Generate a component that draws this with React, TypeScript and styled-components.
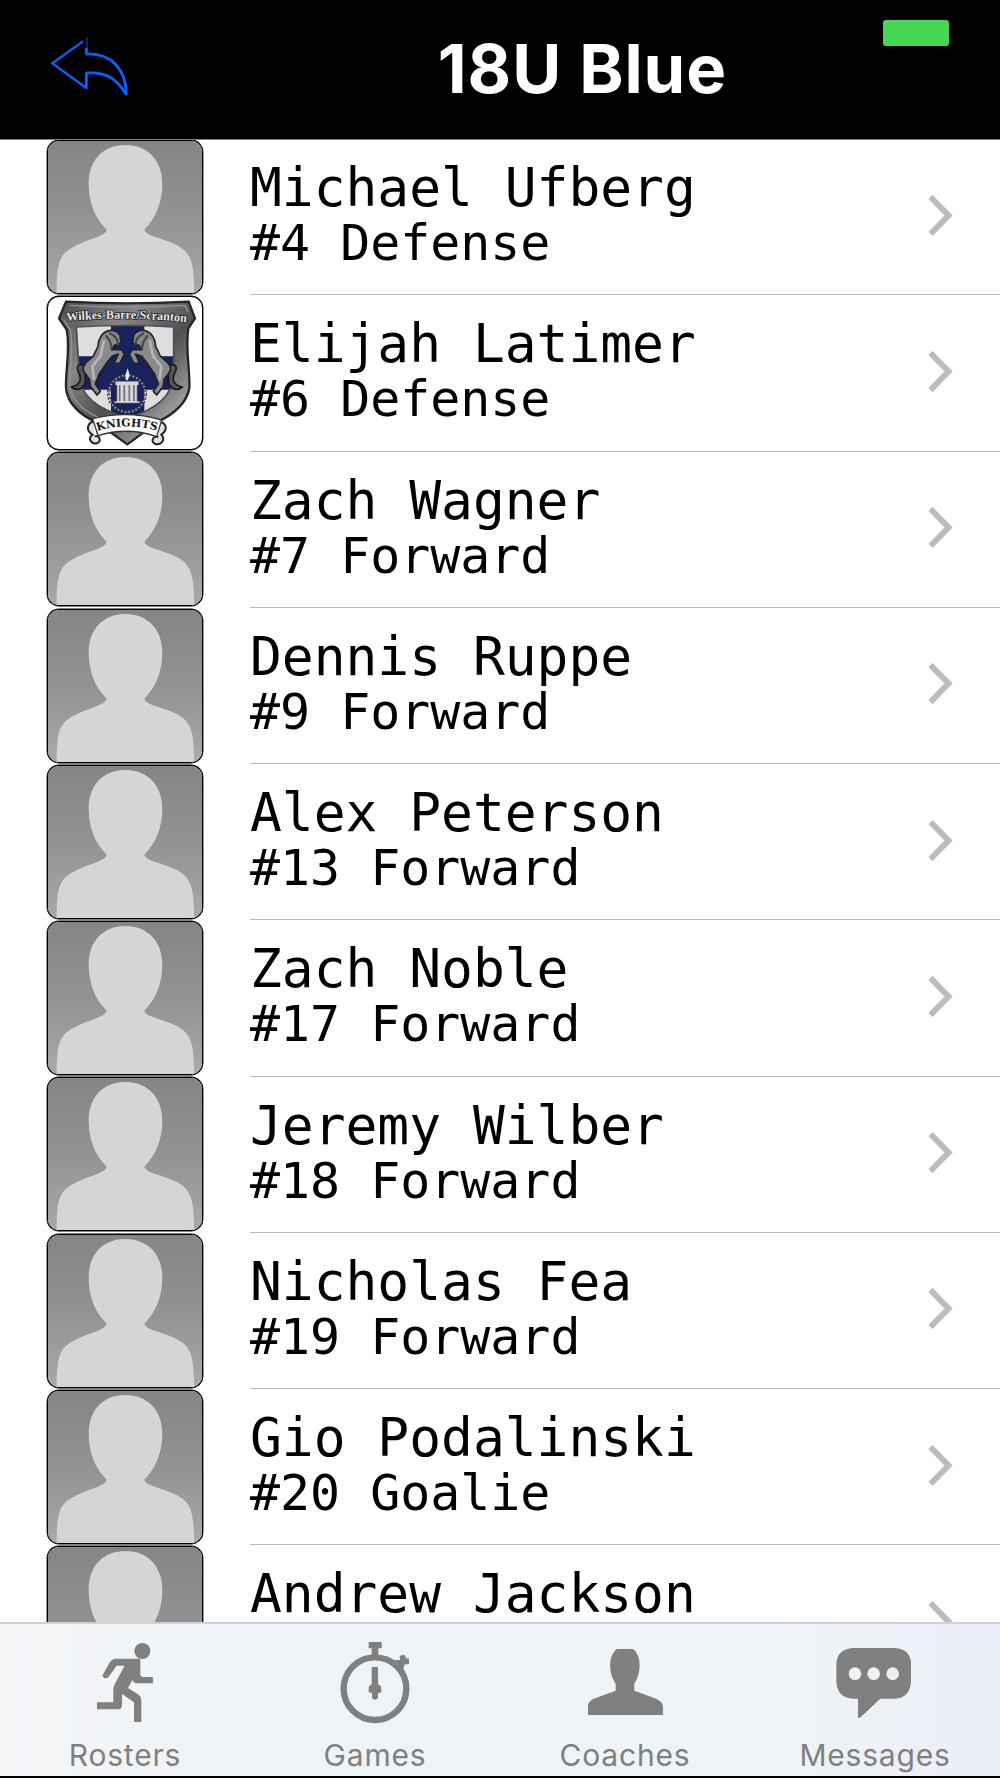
import type { ReactNode } from 'react';
import styled, { createGlobalStyle } from 'styled-components';

const GlobalStyle = createGlobalStyle`
  * {
    box-sizing: border-box;
  }

  body {
    margin: 0;
    background: #000;
  }
`;

const Screen = styled.div`
  display: flex;
  flex-direction: column;
  width: 1000px;
  height: 1778px;
  overflow: hidden;
  background: #000;
`;

const Header = styled.header`
  position: relative;
  display: grid;
  grid-template-columns: 210px 1fr 210px;
  flex: none;
  height: 140px;
  padding: 0 41px;
  border-bottom: 1px solid #808080;
  background: #000;
`;

const BackButton = styled.button`
  align-self: start;
  width: 90px;
  height: 70px;
  margin: 32px 0 0;
  padding: 0;
  border: 0;
  background: none;

  svg {
    display: block;
  }
`;

const Title = styled.h1`
  margin: 28px 0 0;
  padding-left: 165px;
  color: #fff;
  font: 700 67px/81px Inter, 'Liberation Sans', sans-serif;
  letter-spacing: 1px;
  white-space: nowrap;
  justify-self: center;
`;

const CallPill = styled.div`
  position: absolute;
  top: 20px;
  right: 51px;
  width: 66px;
  height: 26px;
  border-radius: 3px;
  background: #44d755;
`;

const List = styled.ul`
  flex: 1;
  min-height: 0;
  margin: -1px 0 0;
  padding: 0;
  overflow: hidden;
  list-style: none;
  background: #fff;
`;

const Row = styled.li`
  display: flex;
  height: 156.25px;
  padding-left: 47px;
`;

const Avatar = styled.div`
  flex: none;
  width: 156px;
  height: 154px;
  margin-top: 0.75px;
  overflow: hidden;
  border: 1px solid #000;
  border-radius: 12px;
  background: #fff;
  box-shadow: 0 0 0 0.4px #000;

  svg {
    display: block;
    width: 154px;
    height: 152px;
  }
`;

const RowBody = styled.div`
  display: flex;
  flex: 1;
  align-items: flex-start;
  justify-content: space-between;
  margin-left: 47px;
  padding-right: 46px;
  border-bottom: 1px solid #bebdc3;

  svg {
    margin-top: 54.5px;
  }
`;

const Player = styled.div`
  padding-top: 19px;
  color: #000;
  font-family: 'DejaVu Sans Mono', 'Liberation Mono', monospace;
  white-space: pre;
`;

const Name = styled.div`
  font-size: 52.9px;
  line-height: 60px;
`;

const Detail = styled.div`
  font-size: 49.9px;
  line-height: 51px;
`;

const TabBar = styled.nav`
  display: grid;
  grid-template-columns: repeat(4, 1fr);
  flex: none;
  height: 154px;
  margin-bottom: 2px;
  border-top: 2px solid #d0d2d4;
  background: linear-gradient(90deg, #f5f6f8 0, #eef3f7 22%, #eef3f7 78%, #eceff6 100%);
`;

const Tab = styled.div`
  display: flex;
  flex-direction: column;
  align-items: center;
  padding-top: 11px;
  color: #808080;
  font: 400 30px/38px Inter, 'Liberation Sans', sans-serif;
  letter-spacing: 0.8px;

  svg {
    display: block;
    margin-bottom: 11px;
  }
`;

const BackArrow = () => (
  <svg width="90" height="70" viewBox="123 96 270 210" fill="none" stroke="#0a60ff">
    <path d="M249 124L157 190L259 264" strokeWidth="7" />
    <path d="M259 266V219C316 215 348 233 379 284C379 208 334 159 259 162V143" strokeWidth="8.5" strokeLinejoin="bevel" />
    <path d="M261 112V145" strokeWidth="4" opacity=".6" />
  </svg>
);

const Chevron = () => (
  <svg width="26" height="44" viewBox="0 0 26 44" fill="none" stroke="#bcbbc1" strokeWidth="6">
    <path d="M2.5 3L20.5 21.5L2.5 40" />
  </svg>
);

const Silhouette = () => (
  <svg viewBox="54 33 462 456" preserveAspectRatio="none">
    <defs>
      <linearGradient id="shade" x1="0" y1="0" x2="0" y2="1">
        <stop offset="0" stopColor="#858585" />
        <stop offset=".5" stopColor="#929292" />
        <stop offset="1" stopColor="#a9a9a9" />
      </linearGradient>
    </defs>
    <path d="M51 30H519V492H51Z" fill="url(#shade)" />
    <path
      d="M286 45C218 45 176 92 176 160C176 218 194 264 230 299C224 320 177 325 131 350C90 372 80 393 80 492H493C491 393 484 369 440 345C398 323 350 320 343 299C378 264 397 218 397 160C397 92 354 45 286 45Z"
      fill="#d5d5d5"
    />
  </svg>
);

const Horse = () => (
  <g strokeLinejoin="round">
    <path
      d="M135 243C108 230 109 252 119 268C126 286 117 302 94 306C114 323 137 306 136 285C136 268 132 255 145 250"
      fill="#55555a"
      stroke="#19191d"
      strokeWidth="5"
    />
    <path
      d="M207 137C185 142 174 164 174 184L160 213C149 225 129 233 129 253C133 268 144 273 149 284L151 304L171 330L181 319L166 297L177 268L200 234L216 214L235 207L222 235L240 234L253 207L244 194L215 194L225 180L243 174L240 151C232 137 217 134 207 137Z"
      fill="#8b898b"
      stroke="#222226"
      strokeWidth="5"
    />
    <path d="M208 144C223 151 235 160 234 180M197 151C208 163 215 173 215 191" fill="none" stroke="#4b4a50" strokeWidth="7" />
    <path d="M192 165L182 213L157 244L162 285" fill="none" stroke="#b9b5b5" strokeWidth="8" />
  </g>
);

const Crest = () => (
  <svg viewBox="24 36 462 456" preserveAspectRatio="none">
    <defs>
      <linearGradient id="steel" x1="0" y1="0" x2="1" y2="1">
        <stop offset="0" stopColor="#4d4d50" />
        <stop offset=".3" stopColor="#858587" />
        <stop offset=".55" stopColor="#505053" />
        <stop offset=".8" stopColor="#999" />
        <stop offset="1" stopColor="#444" />
      </linearGradient>
      <clipPath id="field">
        <path d="M109 126Q262 117 401 126V270C399 328 350 376 262 397C171 373 118 329 118 270Z" />
      </clipPath>
      <path id="topArc" d="M80 108Q262 92 444 112" />
      <path id="bannerArc" d="M172 438Q262 411 352 438" />
    </defs>
    <path
      d="M78 50Q262 60 446 50L465 100L445 130C435 192 451 258 448 309C442 350 405 386 356 409L262 478L169 411C117 389 81 352 78 309C76 255 92 192 80 134L57 100Z"
      fill="url(#steel)"
      stroke="#252528"
      strokeWidth="7"
    />
    <path d="M88 61Q262 70 436 61L444 82M70 103L91 135C103 192 86 256 89 304C94 342 128 375 175 397" fill="none" stroke="#949496" strokeWidth="4" />
    <g clipPath="url(#field)">
      <path d="M90 115H420V410H90Z" fill="#dededf" />
      <path d="M213 115H313V410H213ZM90 214H420V314H90Z" fill="#17225e" />
    </g>
    <path d="M109 126Q262 117 401 126V270C399 328 350 376 262 397C171 373 118 329 118 270Z" fill="none" stroke="#4c4c51" strokeWidth="5" />
    <Horse />
    <g transform="translate(521 0) scale(-1 1)">
      <Horse />
    </g>
    <circle cx="261" cy="326" r="55" fill="none" stroke="#3e424d" strokeWidth="10" strokeDasharray="7 4" />
    <circle cx="261" cy="326" r="55" fill="none" stroke="#bbb" strokeWidth="4" strokeDasharray="4 7" />
    <path d="M225 288H297V301H292V348H300V355H222V348H230V301H225Z" fill="#d6d7dc" stroke="#353744" strokeWidth="3" />
    <path d="M239 301V348M253 301V348M268 301V348M282 301V348" stroke="#6c6e78" strokeWidth="5" />
    <path d="M258 285C252 269 261 264 262 250C271 267 268 277 263 286Z" fill="#e8e8ec" />
    <path
      d="M160 408C139 418 139 437 157 449C141 462 156 479 171 475C186 469 178 449 164 454M363 410C382 420 382 436 364 449C377 463 366 481 346 477C330 470 339 450 355 456"
      fill="#e0e0e0"
      stroke="#252528"
      strokeWidth="6"
    />
    <path d="M158 401Q262 375 365 405L350 455Q262 424 174 452Z" fill="#fff" stroke="#333" strokeWidth="4" />
    <text fill="#e8e8e8" stroke="#29292c" strokeWidth="5" paintOrder="stroke" fontFamily="Liberation Serif, serif" fontSize="37" fontWeight="700">
      <textPath href="#topArc" textLength="360" lengthAdjust="spacingAndGlyphs">Wilkes-Barre/Scranton</textPath>
    </text>
    <text fill="#161619" fontFamily="DejaVu Serif, serif" fontSize="33" fontWeight="700">
      <textPath href="#bannerArc" textLength="180" lengthAdjust="spacingAndGlyphs">KNIGHTS</textPath>
    </text>
  </svg>
);

const RunnerIcon = () => (
  <svg width="120" height="90" viewBox="195 315 360 270" fill="currentColor">
    <circle cx="427" cy="363" r="24" />
    <path d="M345 386H421V435Q423 441 431 441H459V460H412Q400 460 398 449L384 474L414 493Q424 500 424 512V576H402V517L366 492V527Q365 538 354 538H291V517H340V480Q340 470 346 459L374 407H350L325 442Q313 450 307 437L328 399Q336 387 345 386Z" />
  </svg>
);

const StopwatchIcon = () => (
  <svg width="120" height="90" viewBox="945 315 360 270" fill="none" stroke="currentColor">
    <circle cx="1125" cy="476" r="94" strokeWidth="19" />
    <path d="M1106 336H1145V355H1135V381H1115V355H1106ZM1199 377L1214 374L1218 385L1227 386V403H1214L1209 420L1177 391L1200 390ZM1115 411H1134V462L1144 470V487L1134 490V505L1125 510L1116 505V490L1106 486V470L1115 462Z" fill="currentColor" stroke="none" />
  </svg>
);

const CoachIcon = () => (
  <svg width="120" height="90" viewBox="195 315 360 270" fill="currentColor">
    <path d="M351 357H399C426 378 424 430 403 461V482L465 505Q488 514 489 530V555H264V525Q267 512 285 505L347 482V461C325 429 324 376 351 357Z" />
  </svg>
);

const ChatIcon = () => (
  <svg width="120" height="90" viewBox="945 315 360 270" fill="currentColor">
    <path
      fillRule="evenodd"
      d="M1058 354H1184Q1233 358 1233 402V455Q1229 504 1184 506H1141L1080 563H1074V506H1058Q1012 503 1009 455V402Q1012 357 1058 354ZM1046 431a19 19 0 1 0 38 0a19 19 0 1 0-38 0M1102 431a19 19 0 1 0 38 0a19 19 0 1 0-38 0M1159 431a19 19 0 1 0 38 0a19 19 0 1 0-38 0"
    />
  </svg>
);

const PLAYERS = [
  { name: 'Michael Ufberg', number: 4, position: 'Defense' },
  { name: 'Elijah Latimer', number: 6, position: 'Defense', crest: true },
  { name: 'Zach Wagner', number: 7, position: 'Forward' },
  { name: 'Dennis Ruppe', number: 9, position: 'Forward' },
  { name: 'Alex Peterson', number: 13, position: 'Forward' },
  { name: 'Zach Noble', number: 17, position: 'Forward' },
  { name: 'Jeremy Wilber', number: 18, position: 'Forward' },
  { name: 'Nicholas Fea', number: 19, position: 'Forward' },
  { name: 'Gio Podalinski', number: 20, position: 'Goalie' },
  { name: 'Andrew Jackson' },
];

const TABS: { label: string; icon: ReactNode }[] = [
  { label: 'Rosters', icon: <RunnerIcon /> },
  { label: 'Games', icon: <StopwatchIcon /> },
  { label: 'Coaches', icon: <CoachIcon /> },
  { label: 'Messages', icon: <ChatIcon /> },
];

function App() {
  return (
    <>
      <GlobalStyle />
      <Screen>
        <Header>
          <BackButton aria-label="Back">
            <BackArrow />
          </BackButton>
          <Title>18U Blue</Title>
          <CallPill />
        </Header>
        <List>
          {PLAYERS.map(({ name, number, position, crest }) => (
            <Row key={name}>
              <Avatar>{crest ? <Crest /> : <Silhouette />}</Avatar>
              <RowBody>
                <Player>
                  <Name>{name}</Name>
                  {number && (
                    <Detail>
                      #{number} {position}
                    </Detail>
                  )}
                </Player>
                <Chevron />
              </RowBody>
            </Row>
          ))}
        </List>
        <TabBar>
          {TABS.map(({ label, icon }) => (
            <Tab key={label}>
              {icon}
              <span>{label}</span>
            </Tab>
          ))}
        </TabBar>
      </Screen>
    </>
  );
}

export default App;
